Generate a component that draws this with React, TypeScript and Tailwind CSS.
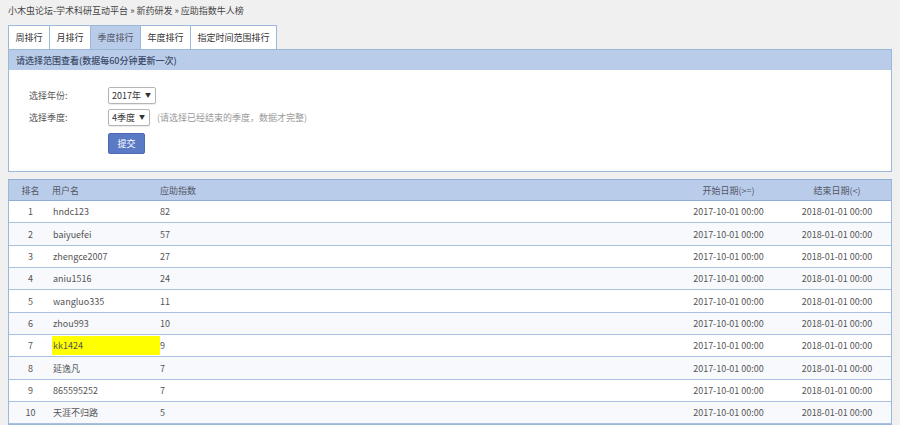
import React from "react";

const rows = [
  { rank: 1, name: "hndc123", score: 82 },
  { rank: 2, name: "baiyuefei", score: 57 },
  { rank: 3, name: "zhengce2007", score: 27 },
  { rank: 4, name: "aniu1516", score: 24 },
  { rank: 5, name: "wangluo335", score: 11 },
  { rank: 6, name: "zhou993", score: 10 },
  { rank: 7, name: "kk1424", score: 9, mark: true },
  { rank: 8, name: "延逸凡", score: 7 },
  { rank: 9, name: "865595252", score: 7 },
  { rank: 10, name: "天涯不归路", score: 5 },
];

const tabs = ["周排行", "月排行", "季度排行", "年度排行", "指定时间范围排行"];

const Select = ({ label }: { label: string }) => (
  <div className="h-[17px] border border-[#b5b5b5] rounded-[2px] bg-white flex items-center gap-[4px] pl-[3px] pr-[4px] text-[#333] whitespace-nowrap shadow-[0_1px_1px_rgba(0,0,0,0.08)]">
    <span>{label}</span>
    <span className="text-[6px]">▼</span>
  </div>
);

const App = () => {
  return (
    <div
      className="w-[900px] h-[425px] overflow-hidden bg-[#f0f0f0] text-[9px] leading-none text-[#555]"
      style={{ fontFamily: '"Noto Sans CJK SC", "Noto Sans", sans-serif' }}
    >
      <div className="pl-[8px] pt-[6px] h-[25px] text-[#444]">
        小木虫论坛-学术科研互动平台 » 新药研发 » 应助指数牛人榜
      </div>

      <div className="mx-[8px] flex h-[24px]">
        {tabs.map((t, i) => (
          <div
            key={t}
            className={`px-[6.5px] flex items-center border border-b-0 border-[#9cb8d8] ${i > 0 ? "-ml-px" : ""} ${
              i === 2 ? "bg-[#b9cdea] text-[#556]" : "bg-white text-[#333]"
            }`}
          >
            {t}
          </div>
        ))}
      </div>

      <div className="mx-[8px] border border-[#9cb8d8] bg-white">
        <div className="h-[20px] bg-[#b9cdea] flex items-center pl-[7px] text-[#3b4a66] font-medium">
          请选择范围查看(数据每60分钟更新一次)
        </div>
        <div className="pt-[16px] pb-[17px] pl-[20px] flex flex-col gap-[4px]">
          <div className="flex items-center h-[18px]">
            <div className="w-[79px]">选择年份:</div>
            <Select label="2017年" />
          </div>
          <div className="flex items-center h-[18px]">
            <div className="w-[79px]">选择季度:</div>
            <Select label="4季度" />
            <span className="ml-[7px] text-[#999]">(请选择已经结束的季度，数据才完整)</span>
          </div>
          <div className="pl-[79px] pt-[3px]">
            <button className="w-[37px] h-[21px] bg-[#5b7ac6] text-white rounded-[2px] border border-[#4d6bb5]">
              提交
            </button>
          </div>
        </div>
      </div>

      <div className="mx-[8px] mt-[7px] border border-[#9cb8d8] border-t-[#8eaed4] bg-white">
        <div className="h-[21px] bg-[#b9cdea] grid grid-cols-[43px_108px_1fr_109px_108px] items-center border-b border-[#8eaed4] text-[#556]">
          <div className="text-center">排名</div>
          <div>用户名</div>
          <div>应助指数</div>
          <div className="text-center">开始日期(&gt;=)</div>
          <div className="text-center">结束日期(&lt;)</div>
        </div>
        {rows.map((r) => (
          <div
            key={r.rank}
            className={`h-[22.35px] grid grid-cols-[43px_108px_1fr_109px_108px] items-stretch border-b border-[#a9c0de] ${
              r.rank % 2 === 0 ? "bg-[#f7f9fc]" : "bg-white"
            }`}
          >
            <div className="flex items-center justify-center">{r.rank}</div>
            <div className={`flex items-center pl-px ${r.mark ? "bg-[#ffff00] my-[1px]" : ""}`}>{r.name}</div>
            <div className="flex items-center">{r.score}</div>
            <div className="flex items-center justify-center">2017-10-01 00:00</div>
            <div className="flex items-center justify-center">2018-01-01 00:00</div>
          </div>
        ))}
      </div>
    </div>
  );
};

export default App;
